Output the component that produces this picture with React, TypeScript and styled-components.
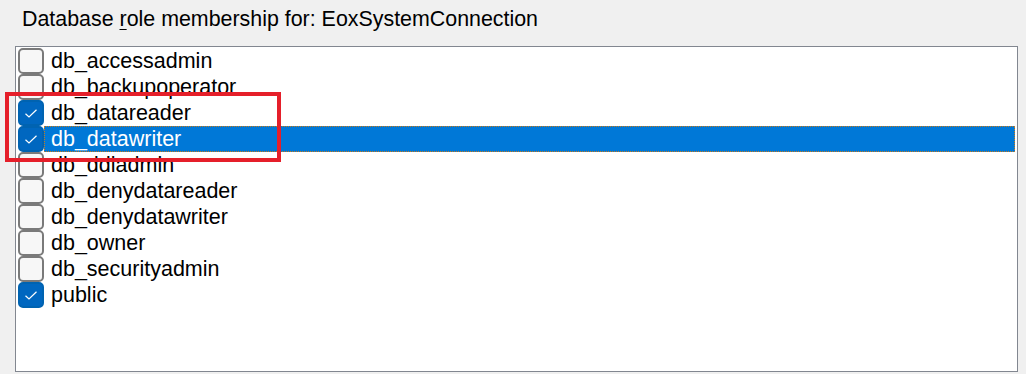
import React from "react";
import styled, { createGlobalStyle } from "styled-components";

const GlobalStyle = createGlobalStyle`
  html, body {
    margin: 0;
    padding: 0;
    background: #f0f0f0;
  }
  body {
    font-family: "Liberation Sans", Arial, sans-serif;
    color: #000;
  }
`;

const Panel = styled.div`
  position: relative;
  width: 1026px;
  height: 374px;
  overflow: hidden;
  background: #f0f0f0;
  padding: 6px 8px 0 15px;
  box-sizing: border-box;
`;

const Caption = styled.div`
  font-size: 21.4px;
  line-height: 26px;
  margin-left: 7px;
  height: 40px;
  white-space: nowrap;

  u {
    text-decoration-thickness: 1px;
    text-underline-offset: 3px;
  }
`;

const ListBox = styled.div`
  width: 1003px;
  height: 326px;
  box-sizing: border-box;
  border: 1px solid #828790;
  background: #fff;
  padding: 1px 2px 0 2px;
`;

const Row = styled.div`
  display: flex;
  align-items: center;
  height: 26px;
`;

const Check = styled.span<{ $checked: boolean }>`
  flex: none;
  width: 26px;
  height: 26px;
  box-sizing: border-box;
  border-radius: 5px;
  border: 2px solid ${(p) => (p.$checked ? "#0063b1" : "#7a7a7a")};
  background: ${(p) => (p.$checked ? "#0067c0" : "#f7f7f7")};
  display: flex;
  align-items: center;
  justify-content: center;
`;

const Label = styled.span<{ $selected: boolean }>`
  flex: 1;
  height: 26px;
  display: flex;
  align-items: center;
  padding-left: 7px;
  font-size: 21.5px;
  white-space: nowrap;
  box-sizing: border-box;
  color: ${(p) => (p.$selected ? "#fff" : "#000")};
  background: ${(p) => (p.$selected ? "#0078d7" : "transparent")};
  outline: ${(p) => (p.$selected ? "1px dotted #c77a1a" : "none")};
  outline-offset: -1px;
`;

const Highlight = styled.div`
  position: absolute;
  left: 5px;
  top: 92px;
  width: 276px;
  height: 70px;
  box-sizing: border-box;
  border: 4px solid #e51f2a;
  pointer-events: none;
`;

const roles = [
  { name: "db_accessadmin", checked: false },
  { name: "db_backupoperator", checked: false },
  { name: "db_datareader", checked: true },
  { name: "db_datawriter", checked: true, selected: true },
  { name: "db_ddladmin", checked: false },
  { name: "db_denydatareader", checked: false },
  { name: "db_denydatawriter", checked: false },
  { name: "db_owner", checked: false },
  { name: "db_securityadmin", checked: false },
  { name: "public", checked: true },
];

const Tick = () => (
  <svg width="14" height="11" viewBox="0 0 14 11">
    <path d="M1.5 5.8 L5 9 L12.5 1.8" fill="none" stroke="#fff" strokeWidth="1.2" />
  </svg>
);

export default function App() {
  return (
    <Panel>
      <GlobalStyle />
      <Caption>
        Database <u>r</u>ole membership for: EoxSystemConnection
      </Caption>
      <ListBox>
        {roles.map((r) => (
          <Row key={r.name}>
            <Check $checked={r.checked}>{r.checked && <Tick />}</Check>
            <Label $selected={!!r.selected}>{r.name}</Label>
          </Row>
        ))}
      </ListBox>
      <Highlight />
    </Panel>
  );
}
